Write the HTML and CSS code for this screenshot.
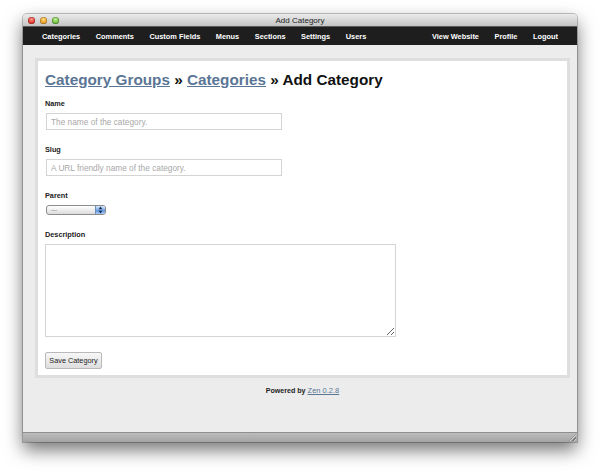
FILE: index.html
```html
<!DOCTYPE html>
<html lang="en">
<head>
<meta charset="utf-8">
<title>Add Category</title>
<link rel="stylesheet" href="styles.css">
</head>
<body>
<div class="window">
  <div class="titlebar">
    <div class="lights">
      <span class="light red"></span>
      <span class="light yellow"></span>
      <span class="light green"></span>
    </div>
    <div class="title">Add Category</div>
    <div></div>
  </div>
  <nav class="nav">
    <a href="#">Categories</a>
    <a href="#">Comments</a>
    <a href="#">Custom Fields</a>
    <a href="#">Menus</a>
    <a href="#">Sections</a>
    <a href="#">Settings</a>
    <a href="#">Users</a>
    <a href="#" class="push">View Website</a>
    <a href="#">Profile</a>
    <a href="#">Logout</a>
  </nav>
  <div class="content">
    <div class="panel">
      <h1 class="heading"><a href="#">Category Groups</a> » <a href="#">Categories</a> » Add Category</h1>
      <div class="field">
        <label class="label">Name</label>
        <input class="text" type="text" placeholder="The name of the category.">
      </div>
      <div class="field">
        <label class="label">Slug</label>
        <input class="text" type="text" placeholder="A URL friendly name of the category.">
      </div>
      <div class="field">
        <label class="label">Parent</label>
        <div class="select">
          <span class="select-value">---</span>
          <span class="stepper">
            <svg width="9" height="10" viewBox="0 0 9 10"><path d="M4.5 1.6 L6.4 4.2 L2.6 4.2 Z" fill="#1b2f55"/><path d="M4.5 8.4 L6.4 5.8 L2.6 5.8 Z" fill="#1b2f55"/></svg>
          </span>
        </div>
      </div>
      <div class="field">
        <label class="label">Description</label>
        <textarea class="area"></textarea>
      </div>
      <button class="button" type="button">Save Category</button>
    </div>
    <p class="footer"><b>Powered by</b> <a href="#">Zen 0.2.8</a></p>
  </div>
  <div class="statusbar"><span class="grip"></span></div>
</div>
</body>
</html>
```
FILE: styles.css
```css
html, body {
  margin: 0;
  padding: 0;
  background: #ffffff;
}
body {
  font-family: "Liberation Sans", Arial, sans-serif;
  padding: 14px 0 31px 23px;
}
.window {
  width: 554px;
  height: 428px;
  display: flex;
  flex-direction: column;
  border-radius: 4px 4px 0 0;
  box-shadow: 0 0 0 1px rgba(0,0,0,0.22), 0 8px 18px rgba(0,0,0,0.55);
  overflow: hidden;
}
.titlebar {
  height: 13px;
  flex: none;
  display: grid;
  grid-template-columns: 1fr auto 1fr;
  align-items: center;
  background: linear-gradient(#ebebeb, #c4c4c4);
  border-bottom: 1px solid #5a5a5a;
  box-sizing: border-box;
}
.lights {
  display: flex;
  gap: 5px;
  padding-left: 5px;
  align-items: center;
}
.light {
  width: 7px;
  height: 7px;
  border-radius: 50%;
  box-shadow: inset 0 0 0 0.5px rgba(0,0,0,0.35);
}
.red { background: radial-gradient(circle at 50% 35%, #ff9a8f, #e0352b 60%, #b51c14); }
.yellow { background: radial-gradient(circle at 50% 35%, #ffd98a, #e8a020 60%, #b9730d); }
.green { background: radial-gradient(circle at 50% 35%, #c5f0a0, #6cbf3a 60%, #3f8b1c); }
.title {
  font-size: 8px;
  color: #222;
  line-height: 13px;
}
.nav {
  height: 18px;
  flex: none;
  background: #1e1e1e;
  display: flex;
  align-items: center;
  gap: 15.5px;
  padding: 0 19px;
}
.nav a {
  color: #ffffff;
  font-weight: bold;
  font-size: 7.4px;
  text-decoration: none;
}
.nav .push {
  margin-left: auto;
}
.content {
  flex: 1;
  background: #ececec;
  padding: 13px 7px 0 12px;
}
.panel {
  background: #ffffff;
  border: 3px solid #dedede;
  padding: 10px 7px 6px 7px;
}
.heading {
  margin: 0 0 10px 0;
  font-size: 15.3px;
  line-height: 18px;
  font-weight: bold;
  color: #111;
}
.heading a {
  color: #5a7595;
  text-decoration: underline;
  text-underline-offset: 1px;
}
.field {
  margin-bottom: 15px;
}
.label {
  display: block;
  font-size: 7.3px;
  line-height: 10px;
  font-weight: bold;
  color: #222;
  margin-bottom: 4px;
}
.text {
  display: block;
  box-sizing: border-box;
  width: 236px;
  height: 17px;
  margin: 0 0 0 1px;
  padding: 0 4px;
  border: 1px solid #d4d4d4;
  background: #fff;
  font-family: "Liberation Sans", Arial, sans-serif;
  font-size: 8.3px;
  outline: none;
}
.text::placeholder {
  color: #a8a8a8;
}
.select {
  display: flex;
  box-sizing: border-box;
  width: 60px;
  height: 10px;
  margin-left: 1px;
  border: 1px solid #8c8c8c;
  border-radius: 3px;
  overflow: hidden;
  background: linear-gradient(#ffffff, #dcdcdc);
}
.select-value {
  flex: 1;
  font-size: 6px;
  line-height: 8px;
  color: #555;
  padding-left: 4px;
}
.stepper {
  width: 9px;
  display: flex;
  align-items: center;
  justify-content: center;
  background: linear-gradient(#d6e6fb, #7eaee9 50%, #5a93dc 51%, #a9cbf4);
  border-left: 1px solid #6f8fb8;
}
.area {
  display: block;
  box-sizing: border-box;
  width: 351px;
  height: 93px;
  margin: 0;
  border: 1px solid #d4d4d4;
  background: #fff;
  outline: none;
}
.button {
  display: block;
  box-sizing: border-box;
  width: 57px;
  height: 17px;
  padding: 0;
  border: 1px solid #b9b9b9;
  border-radius: 2px;
  background: linear-gradient(#f7f7f7, #dedede);
  font-family: "Liberation Sans", Arial, sans-serif;
  font-size: 7.3px;
  color: #222;
}
.footer {
  margin: 8px 0 0 0;
  text-align: center;
  font-size: 7.1px;
  line-height: 10px;
  color: #222;
}
.footer a {
  color: #5a7595;
  font-size: 7.5px;
  text-decoration: underline;
}
.statusbar {
  height: 10px;
  flex: none;
  box-sizing: border-box;
  background: linear-gradient(#bcbcbc, #a4a4a4);
  border-top: 1px solid #8e8e8e;
  display: flex;
  justify-content: flex-end;
  align-items: flex-end;
}
.grip {
  width: 7px;
  height: 7px;
  margin: 0 1px 1px 0;
  background: repeating-linear-gradient(135deg, transparent 0 1px, #7a7a7a 1px 2px, #d0d0d0 2px 3px);
  clip-path: polygon(100% 0, 100% 100%, 0 100%);
}
```
